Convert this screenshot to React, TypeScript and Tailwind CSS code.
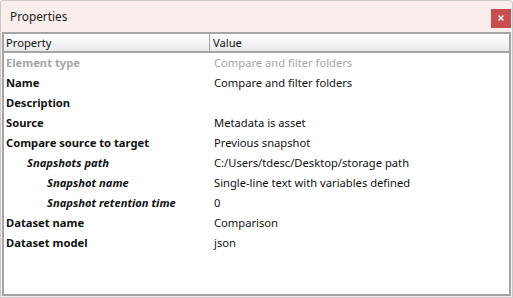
import { X } from "lucide-react";

type Row = {
  label: string;
  value: string;
  indent?: 0 | 1 | 2;
  muted?: boolean;
};

const rows: Row[] = [
  { label: "Element type", value: "Compare and filter folders", muted: true },
  { label: "Name", value: "Compare and filter folders" },
  { label: "Description", value: "" },
  { label: "Source", value: "Metadata is asset" },
  { label: "Compare source to target", value: "Previous snapshot" },
  { label: "Snapshots path", value: "C:/Users/tdesc/Desktop/storage path", indent: 1 },
  { label: "Snapshot name", value: "Single-line text with variables defined", indent: 2 },
  { label: "Snapshot retention time", value: "0", indent: 2 },
  { label: "Dataset name", value: "Comparison" },
  { label: "Dataset model", value: "json" },
];

export default function App() {
  return (
    <div
      className="flex h-[298px] w-[513px] flex-col overflow-hidden rounded-t-[3px] border border-[#c9c9c9] bg-[#f9eeec] text-[11.2px] text-black"
      style={{ fontFamily: '"Noto Sans", "Segoe UI", sans-serif' }}
    >
      <div className="flex h-[31px] shrink-0 items-center justify-between pl-[9px] pr-[1px]">
        <span className="text-[11.8px] text-[#222]">Properties</span>
        <button
          type="button"
          className="mt-[3px] flex h-[19px] w-[20px] items-center justify-center bg-[#c84f4f] text-white"
        >
          <X size={8} strokeWidth={4.5} />
        </button>
      </div>
      <div className="mx-[1px] mb-[1px] flex flex-1 flex-col border-2 border-[#a4a4a4] bg-white">
        <div className="flex h-[19px] shrink-0 border-b-2 border-[#a4a4a4] bg-gradient-to-b from-white to-[#e9e9e9] leading-[17px] text-[#111]">
          <div className="w-[206px] border-r border-[#a4a4a4] pl-[2px]">Property</div>
          <div className="pl-[3px]">Value</div>
        </div>
        <div className="flex flex-col">
          {rows.map((row) => (
            <div key={row.label} className="flex h-[20px] items-center">
              <div
                className={
                  "w-[207px] font-bold " +
                  (row.muted ? "text-[#a6a6a6] " : "text-[#111] ") +
                  (row.indent === 1 ? "pl-[23px] italic" : row.indent === 2 ? "pl-[43px] italic" : "pl-[2px]")
                }
              >
                {row.label}
              </div>
              <div className={"pl-[3px] " + (row.muted ? "text-[#a6a6a6]" : "text-[#111]")}>{row.value}</div>
            </div>
          ))}
        </div>
      </div>
    </div>
  );
}
